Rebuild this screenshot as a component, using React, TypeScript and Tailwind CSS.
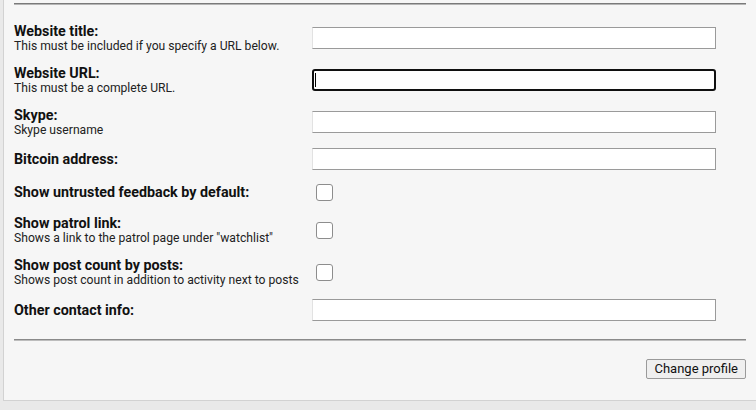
import React from 'react';

type Row = {
  label: string;
  hint?: string;
  kind: 'text' | 'check';
  focused?: boolean;
  h: string;
};

const rows: Row[] = [
  { label: 'Website title:', hint: 'This must be included if you specify a URL below.', kind: 'text', h: 'h-[42px]' },
  { label: 'Website URL:', hint: 'This must be a complete URL.', kind: 'text', focused: true, h: 'h-[42px]' },
  { label: 'Skype:', hint: 'Skype username', kind: 'text', h: 'h-[41px]' },
  { label: 'Bitcoin address:', kind: 'text', h: 'h-[33px]' },
  { label: 'Show untrusted feedback by default:', kind: 'check', h: 'h-[34px]' },
  { label: 'Show patrol link:', hint: 'Shows a link to the patrol page under "watchlist"', kind: 'check', h: 'h-[42px]' },
  { label: 'Show post count by posts:', hint: 'Shows post count in addition to activity next to posts', kind: 'check', h: 'h-[42px]' },
  { label: 'Other contact info:', kind: 'text', h: 'h-[34px]' },
];

const Field: React.FC<{ row: Row }> = ({ row }) => {
  if (row.kind === 'check') {
    return (
      <span className="ml-[4px] block w-[17px] h-[17px] rounded-[3px] border border-[#8d8d8d] bg-white" />
    );
  }
  if (row.focused) {
    return (
      <div className="relative w-[404px] h-[22px] rounded-[3px] border-2 border-[#101010] bg-white">
        <span className="absolute left-[1px] top-[2px] w-px h-[14px] bg-black" />
      </div>
    );
  }
  return (
    <div className="w-[404px] h-[22px] border border-[#9a9a9a] border-l-[#e2e2e2] bg-white" />
  );
};

export default function App() {
  return (
    <div className="min-h-screen bg-[#e9e9e9] font-['Roboto',sans-serif] text-[#111]">
      <div className="ml-[3px] border-l border-b border-[#d2d2d2] bg-[#f6f6f6] px-[10px] pt-[3px] pb-[21px]">
        <div className="h-[2px] border-t border-[#7a7a7a] bg-[#b5b5b5]" />

        <div className="mt-[12px] grid grid-cols-[298px_1fr]">
          {rows.map((row) => (
            <React.Fragment key={row.label}>
              <div className={`flex flex-col justify-center py-[6px] ${row.h}`}>
                <span className="text-[14.3px] leading-[16px] font-bold">{row.label}</span>
                {row.hint && <span className="text-[12.15px] leading-[14px] text-[#222]">{row.hint}</span>}
              </div>
              <div className="flex items-center">
                <Field row={row} />
              </div>
            </React.Fragment>
          ))}
        </div>

        <div className="mt-[12px] h-[2px] border-t border-[#8a8a8a] bg-[#bdbdbd]" />

        <div className="mt-[18px] flex justify-end">
          <button className="h-[20px] px-[7px] rounded-[2px] border border-[#9a9a9a] bg-[#efefef] text-[13px] leading-[18px] text-[#111]">
            Change profile
          </button>
        </div>
      </div>
    </div>
  );
}
